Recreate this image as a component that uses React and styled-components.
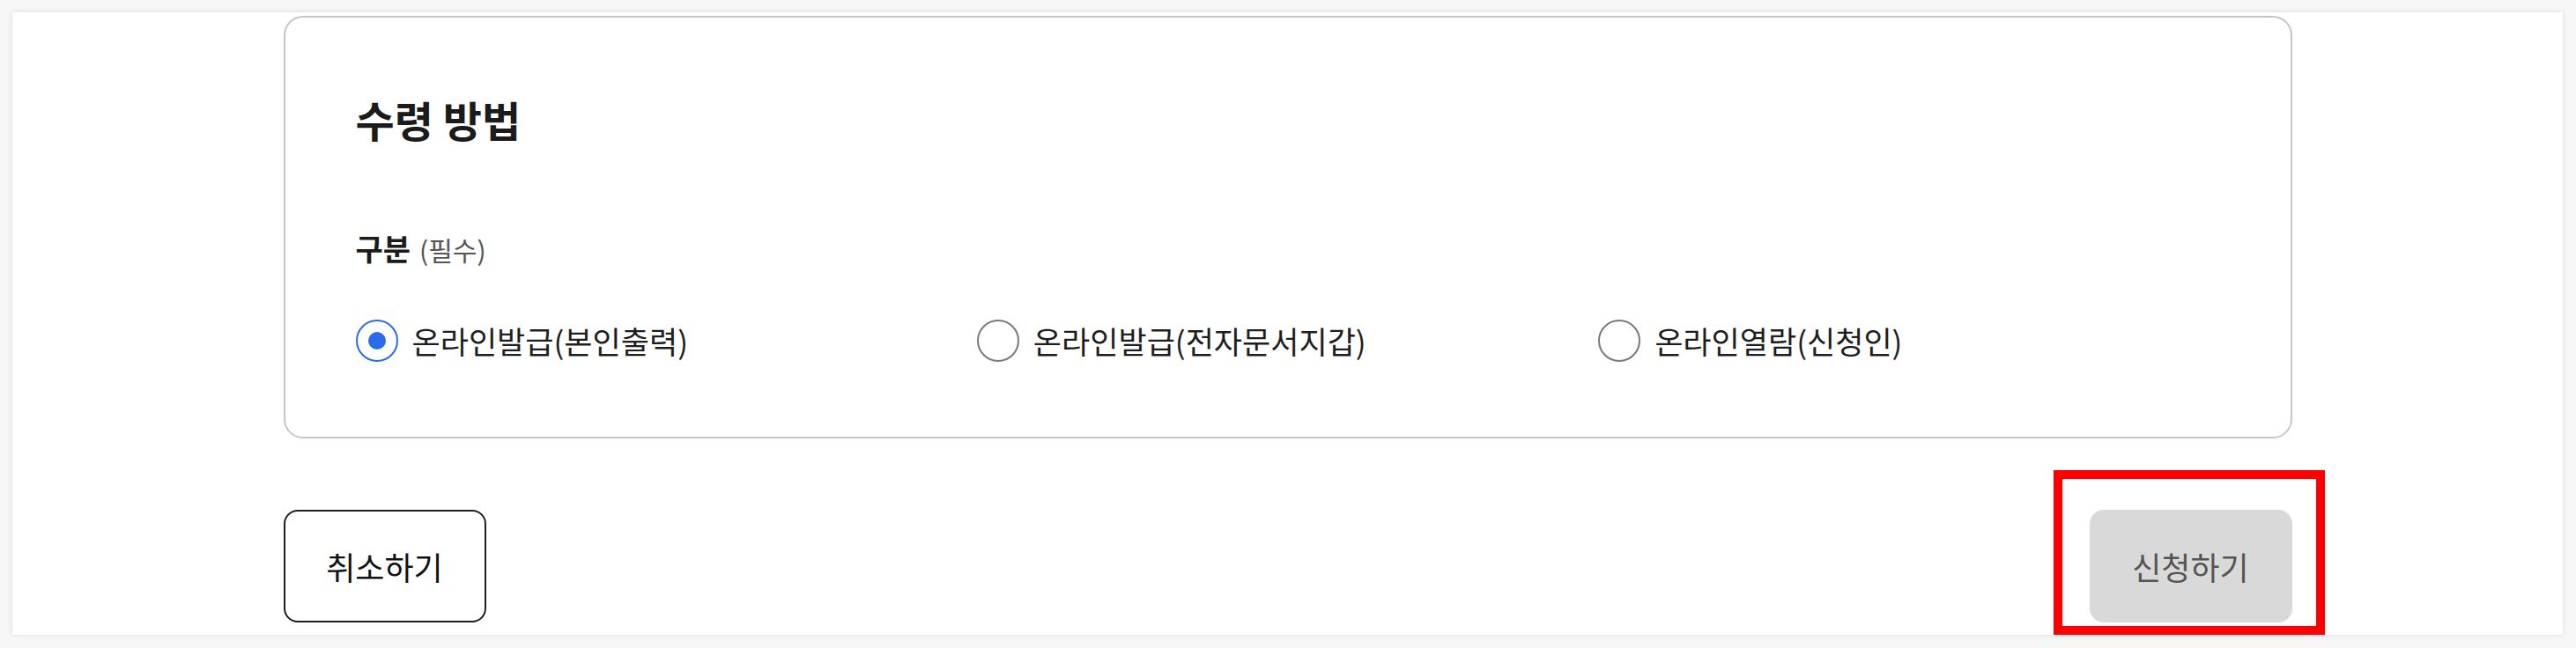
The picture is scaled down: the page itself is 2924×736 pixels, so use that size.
import React, { useState } from "react";
import styled, { createGlobalStyle } from "styled-components";

const Global = createGlobalStyle`
  html, body { margin: 0; padding: 0; }
  body {
    background: #f7f7f7;
    font-family: "Noto Sans CJK KR", "Noto Sans", sans-serif;
    color: #1e1e1e;
  }
  * { box-sizing: border-box; }
`;

const Panel = styled.div`
  margin: 14px 15px 15px 14px;
  height: 707px;
  background: #ffffff;
  box-shadow: 0 0 6px rgba(0, 0, 0, 0.12);
  padding: 4px 0 14px;
  display: flex;
  flex-direction: column;
`;

const Container = styled.div`
  width: 2280px;
  margin: 0 auto;
  display: flex;
  flex-direction: column;
`;

const Card = styled.section`
  border: 2px solid #c6c6c6;
  border-radius: 22px;
  height: 480px;
  padding: 85px 80px 0;
  display: flex;
  flex-direction: column;
`;

const Title = styled.h2`
  margin: 0;
  font-size: 48px;
  line-height: 60px;
  font-weight: 700;
  color: #1b1b1b;
`;

const FieldLabel = styled.div`
  margin-top: 95px;
  display: flex;
  align-items: baseline;
  gap: 10px;
  font-size: 34px;
  line-height: 44px;
  font-weight: 700;
  color: #1b1b1b;
`;

const Required = styled.span`
  font-size: 30px;
  font-weight: 400;
  color: #555555;
`;

const Options = styled.div`
  margin-top: 58px;
  display: grid;
  grid-template-columns: repeat(3, 1fr);
`;

const Option = styled.label`
  display: flex;
  align-items: center;
  gap: 16px;
  font-size: 35px;
  line-height: 48px;
  color: #1e1e1e;
  cursor: pointer;
`;

const RadioCircle = styled.span`
  width: 48px;
  height: 48px;
  border-radius: 50%;
  border: 2px solid ${(p) => (p.$checked ? "#2b6de8" : "#7a7a7a")};
  display: flex;
  align-items: center;
  justify-content: center;
  flex-shrink: 0;
  &::after {
    content: "";
    width: 20px;
    height: 20px;
    border-radius: 50%;
    background: #2b6de8;
    display: ${(p) => (p.$checked ? "block" : "none")};
  }
`;

const Footer = styled.div`
  margin-top: 81px;
  display: flex;
  justify-content: space-between;
  align-items: center;
`;

const ButtonWrap = styled.div`
  position: relative;
`;

const Button = styled.button`
  width: 230px;
  height: 128px;
  border-radius: 16px;
  font-family: "Noto Sans CJK KR", "Noto Sans", sans-serif;
  font-size: 36px;
  font-weight: 400;
  border: ${(p) => (p.$variant === "outline" ? "2px solid #1e1e1e" : "none")};
  background: ${(p) => (p.$variant === "outline" ? "#ffffff" : "#d9d9d9")};
  color: ${(p) => (p.$variant === "outline" ? "#111111" : "#555555")};
  cursor: pointer;
`;

const Highlight = styled.div`
  position: absolute;
  top: -45px;
  left: -41px;
  right: -37px;
  bottom: -14px;
  border: 10px solid #ff0000;
  pointer-events: none;
`;

const options = [
  "온라인발급(본인출력)",
  "온라인발급(전자문서지갑)",
  "온라인열람(신청인)",
];

export default function App() {
  const [selected, setSelected] = useState(0);
  return (
    <>
      <Global />
      <Panel>
        <Container>
          <Card>
            <Title>수령 방법</Title>
            <FieldLabel>
              구분<Required>(필수)</Required>
            </FieldLabel>
            <Options>
              {options.map((o, i) => (
                <Option key={o} onClick={() => setSelected(i)}>
                  <RadioCircle $checked={selected === i} />
                  {o}
                </Option>
              ))}
            </Options>
          </Card>
          <Footer>
            <Button $variant="outline">취소하기</Button>
            <ButtonWrap>
              <Button $variant="filled" disabled>신청하기</Button>
              <Highlight />
            </ButtonWrap>
          </Footer>
        </Container>
      </Panel>
    </>
  );
}
